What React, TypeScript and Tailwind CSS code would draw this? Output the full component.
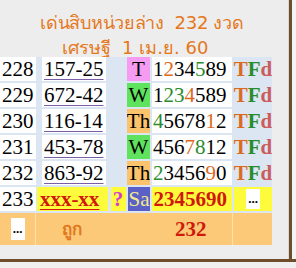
import React from "react";

type Digit = [string, string];

const O = "text-[#dd6a1c]";
const G = "text-[#2a8c2a]";
const K = "text-black";

const rows: { n: string; pair: string; day: string; dayBg: string; digits: Digit[] }[] = [
  { n: "228", pair: "157-25", day: "T", dayBg: "bg-[#f59cf2]", digits: [["1", K], ["2", O], ["3", K], ["4", K], ["5", G], ["8", K], ["9", K]] },
  { n: "229", pair: "672-42", day: "W", dayBg: "bg-[#5fe35f]", digits: [["1", K], ["2", G], ["3", G], ["4", O], ["5", K], ["8", K], ["9", K]] },
  { n: "230", pair: "116-14", day: "Th", dayBg: "bg-[#fbc46c]", digits: [["4", G], ["5", K], ["6", K], ["7", K], ["8", K], ["1", O], ["2", K]] },
  { n: "231", pair: "453-78", day: "W", dayBg: "bg-[#5fe35f]", digits: [["4", K], ["5", K], ["6", K], ["7", O], ["8", G], ["1", K], ["2", K]] },
  { n: "232", pair: "863-92", day: "Th", dayBg: "bg-[#fbc46c]", digits: [["2", G], ["3", K], ["4", K], ["5", K], ["6", K], ["9", O], ["0", K]] },
];

function TFd() {
  return (
    <span className="font-bold">
      <span className="text-[#dd6a1c]">T</span>
      <span className="text-[#2a8c2a]">F</span>
      <span className="text-[#cc5c5c]">d</span>
    </span>
  );
}

export default function App() {
  return (
    <div className="relative h-[268px] w-[296px] overflow-hidden bg-[#ededed] font-['Liberation_Serif',serif] text-[21px] leading-none">
      <div className="flex h-[259px]">
        <div className="flex w-[288px] flex-col">
          <div className="flex h-[57px] w-[272px] flex-col items-center pt-[10px] font-['DejaVu_Sans','Noto_Sans',sans-serif] text-[18px] leading-[25px] text-[#e5781b]">
            <div className="pl-[12px] tracking-[-0.3px]">เด่นสิบหน่วยล่าง&nbsp; 232 งวด</div>
            <div className="pr-[2px]">เศรษฐี&nbsp; 1 เม.ย. 60</div>
          </div>
          <div className="flex w-[272px] flex-col gap-[2px] bg-[#dce6f2]">
            {rows.map((r) => (
              <div key={r.n} className="flex h-[24px]">
                <div className="flex w-[36px] items-center bg-white pl-[2px]">{r.n}</div>
                <div className="w-[6px]" />
                <div className="flex w-[64px] items-center bg-white pl-[2px]">
                  <span className="underline decoration-[#7b5fa6] decoration-1 underline-offset-[3px]">{r.pair}</span>
                </div>
                <div className="w-[21px]" />
                <div className={`flex w-[23px] items-center justify-center overflow-hidden ${r.dayBg}`}>{r.day}</div>
                <div className="w-[2px]" />
                <div className="flex w-[80px] items-center bg-white pl-[1px]">
                  {r.digits.map(([d, c], i) => (
                    <span key={i} className={c}>{d}</span>
                  ))}
                </div>
                <div className="w-[2px]" />
                <div className="flex w-[38px] items-center justify-center">
                  <TFd />
                </div>
              </div>
            ))}
            <div className="flex h-[24px]">
              <div className="flex w-[36px] items-center bg-white pl-[2px]">233</div>
              <div className="w-[1px]" />
              <div className="flex w-[71px] items-center bg-[#fefb3c] pl-[3px]">
                <span className="font-bold text-[#d0180c] underline decoration-[#d0180c] decoration-1 underline-offset-[3px]">xxx-xx</span>
              </div>
              <div className="w-[3px]" />
              <div className="flex w-[15px] items-center justify-center bg-[#fefb3c] font-bold text-[#d23ad2]">?</div>
              <div className="w-[2px]" />
              <div className="flex w-[23px] items-center justify-center overflow-hidden bg-[#5a60c6] text-[#f2e98e]">Sa</div>
              <div className="w-[2px]" />
              <div className="flex w-[80px] items-center bg-[#fefb3c] pl-[1px] font-bold text-[#d0180c]">2345690</div>
              <div className="w-[2px]" />
              <div className="flex w-[38px] items-center justify-center bg-[#fefb3c]">
                <span className="flex h-[20px] w-[14px] items-end justify-center bg-white pb-[4px] text-[13px] font-bold">...</span>
              </div>
            </div>
            <div className="flex h-[32px] bg-[#fcc978]">
              <div className="flex w-[36px] items-center justify-center border-r border-[#fde1b0]">
                <span className="flex h-[22px] w-[14px] items-end justify-center bg-white pb-[5px] text-[13px] font-bold">...</span>
              </div>
              <div className="flex w-[196px] items-center pl-[26px]">
                <span className="w-[113px] font-['DejaVu_Sans','Noto_Sans',sans-serif] text-[17px] font-bold text-[#e2781e]">ถูก</span>
                <span className="font-bold text-[#d0180c]">232</span>
              </div>
              <div className="w-[40px] border-l border-[#fde1b0]" />
            </div>
          </div>
        </div>
        <div className="w-[1px] bg-[#d8d8d8]" />
        <div className="w-[3px] bg-[#6d4d2c]" />
        <div className="flex-1 bg-[#f3f3f3]" />
      </div>
      <div className="h-[3px] w-full bg-[#6d4d2c]" />
      <div className="h-[6px] w-full bg-[#f0f0f0]" />
    </div>
  );
}
